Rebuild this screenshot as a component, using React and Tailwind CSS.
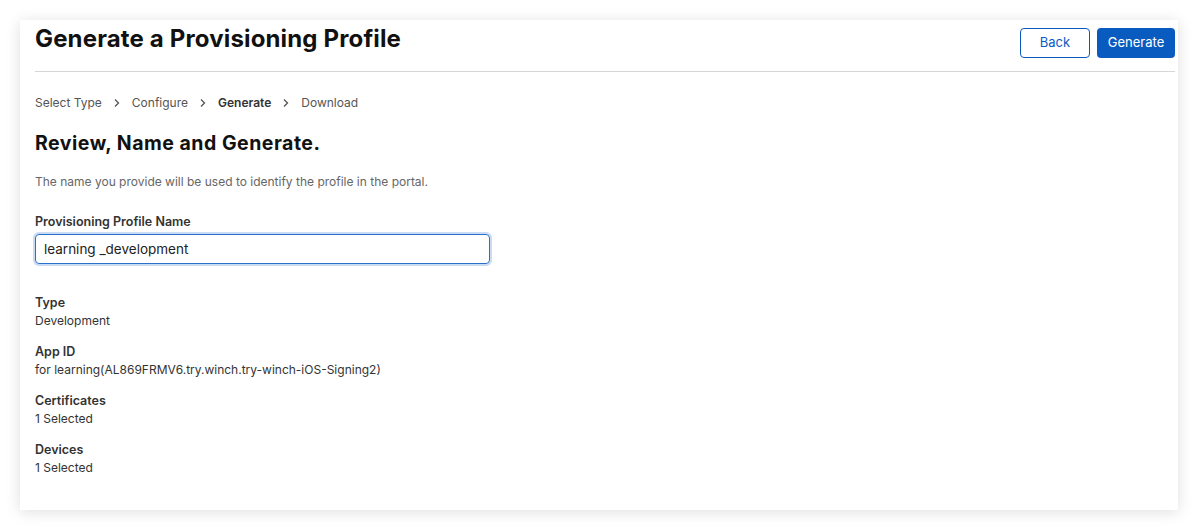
import { useState } from 'react'

// Small label/value pair used in the summary list
const Field = ({ label, value }) => (
  <div className="flex flex-col">
    <span className="text-[12.5px] leading-[18px] font-semibold text-[#333]">{label}</span>
    <span className="text-[12px] leading-[18px] text-[#333]">{value}</span>
  </div>
)

const Chevron = () => (
  <svg width="8" height="10" viewBox="0 0 8 10" className="mx-[11px]">
    <path d="M2 1.5 L5.5 5 L2 8.5" fill="none" stroke="#555" strokeWidth="1.3" />
  </svg>
)

export default function App() {
  const [name, setName] = useState('learning _development')

  return (
    <div className="min-h-[530px] bg-white pt-[20px] px-[20px] font-['Inter',sans-serif]">
      <div className="bg-white shadow-[0_2px_14px_rgba(0,0,0,0.13)] h-[490px] px-[15px] pr-[3px]">
        {/* Header */}
        <div className="flex justify-between items-start border-b border-[#d6d6d6] h-[52px]">
          <h1 className="text-[24px] leading-[30px] font-bold text-[#111] pt-[4px] tracking-[0.15px]">
            Generate a Provisioning Profile
          </h1>
          <div className="flex gap-[7px] pt-[8px]">
            <button className="w-[70px] h-[30px] rounded-[4px] border border-[#0a5bbf] text-[#0a5bbf] text-[13px]">
              Back
            </button>
            <button className="w-[78px] h-[30px] rounded-[4px] bg-[#0a5bbf] text-white text-[13px]">
              Generate
            </button>
          </div>
        </div>

        {/* Steps */}
        <div className="flex items-center text-[12px] text-[#555] mt-[22px] h-[18px]">
          <span>Select Type</span>
          <Chevron />
          <span>Configure</span>
          <Chevron />
          <span className="font-semibold text-[#333]">Generate</span>
          <Chevron />
          <span>Download</span>
        </div>

        <h2 className="text-[19.5px] leading-[24px] font-bold text-[#111] mt-[19px] tracking-[0.5px]">
          Review, Name and Generate.
        </h2>

        <p className="text-[12px] text-[#666] mt-[19px] leading-[16px]">
          The name you provide will be used to identify the profile in the portal.
        </p>

        <label className="block text-[12.5px] font-semibold text-[#333] mt-[24px] leading-[16px]">
          Provisioning Profile Name
        </label>
        <input
          value={name}
          onChange={(e) => setName(e.target.value)}
          className="mt-[4px] w-[455px] h-[30px] rounded-[4px] border border-[#2a6fc9] shadow-[0_0_0_2px_rgba(80,140,220,0.3)] px-[8px] text-[13.5px] text-[#222] outline-none"
        />

        <div className="flex flex-col gap-[13px] mt-[30px]">
          <Field label="Type" value="Development" />
          <Field label="App ID" value="for learning(AL869FRMV6.try.winch.try-winch-iOS-Signing2)" />
          <Field label="Certificates" value="1 Selected" />
          <Field label="Devices" value="1 Selected" />
        </div>
      </div>
    </div>
  )
}
